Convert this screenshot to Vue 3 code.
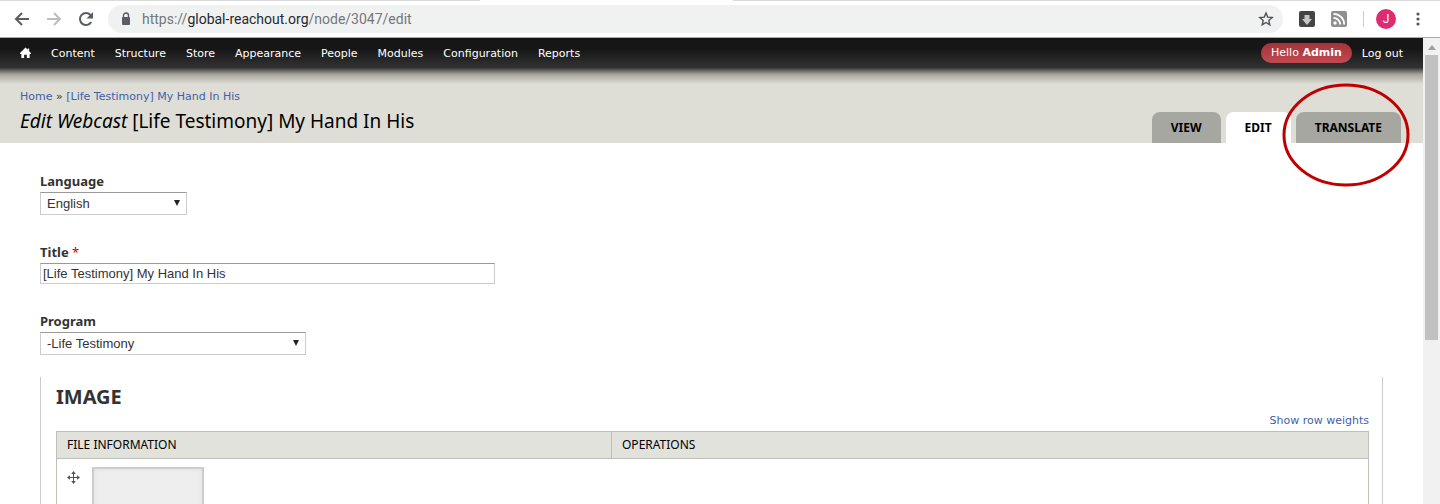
<script setup>
import { ref } from 'vue'

const menu = ['Content', 'Structure', 'Store', 'Appearance', 'People', 'Modules', 'Configuration', 'Reports']
const tabs = [
  { label: 'View', active: false, marked: false },
  { label: 'Edit', active: true, marked: false },
  { label: 'Translate', active: false, marked: true },
]
const language = ref('English')
const title = ref('[Life Testimony] My Hand In His')
const program = ref('-Life Testimony')
</script>

<template>
  <div class="window">
    <header class="browser">
      <div class="tab-edge"><span></span></div>
      <div class="bar">
        <button class="nav" aria-label="Back">
          <svg width="16" height="16" viewBox="0 0 16 16"><path d="M15 8H2M8 2L2 8l6 6" fill="none" stroke="#5a5d61" stroke-width="2" /></svg>
        </button>
        <button class="nav" aria-label="Forward" disabled>
          <svg width="16" height="16" viewBox="0 0 16 16"><path d="M1 8h13M8 2l6 6-6 6" fill="none" stroke="#bdbdbd" stroke-width="2" /></svg>
        </button>
        <button class="nav" aria-label="Reload">
          <svg width="16" height="16" viewBox="0 0 16 16"><path d="M13.2 11A6 6 0 1 1 12.5 4" fill="none" stroke="#5a5d61" stroke-width="2" /><path d="M15 1v6.500H8.500z" fill="#5a5d61" /></svg>
        </button>
        <div class="address">
          <svg width="10" height="14" viewBox="0 0 10 14"><path d="M2.500 6V3.500a2.500 2.500 0 0 1 5 0V6" fill="none" stroke="#5a5d61" stroke-width="1.400" /><rect x="1" y="5" width="8" height="8" rx="1" fill="#5a5d61" /></svg>
          <span class="url">https://<b>global-reachout.org</b>/node/3047/edit</span>
          <button class="nav star" aria-label="Bookmark this page">
            <svg width="16" height="16" viewBox="0 0 16 16"><path d="M8 2l1.700 4.100 4.500.4-3.400 2.900 1 4.400L8 11.500l-3.800 2.300 1-4.400L1.800 6.500l4.500-.4z" fill="none" stroke="#4f5256" stroke-width="1.400" /></svg>
          </button>
        </div>
        <button class="nav ext" aria-label="Downloader">
          <svg width="16" height="16" viewBox="0 0 16 16"><rect width="16" height="16" rx="2" fill="#444" /><path d="M5.500 4h5v4H13l-5 6-5-6h2.500z" fill="#c6c6c6" /></svg>
        </button>
        <button class="nav ext" aria-label="RSS feed">
          <svg width="16" height="16" viewBox="0 0 16 16"><rect width="16" height="16" rx="2" fill="#8f8f8f" /><circle cx="4" cy="12" r="1.700" fill="#fff" /><path d="M2.500 6.800a6.700 6.700 0 0 1 6.700 6.700M2.500 2.800a10.700 10.700 0 0 1 10.700 10.700" fill="none" stroke="#fff" stroke-width="1.800" /></svg>
        </button>
        <span class="divider"></span>
        <button class="avatar" aria-label="Profile">J</button>
        <button class="nav more" aria-label="Menu">
          <svg width="4" height="14" viewBox="0 0 4 14"><g fill="#55585c"><circle cx="2" cy="2" r="1.600" /><circle cx="2" cy="7" r="1.600" /><circle cx="2" cy="12" r="1.600" /></g></svg>
        </button>
      </div>
    </header>

    <div class="viewport">
      <div class="page">
        <nav class="admin">
          <a href="#" class="home" aria-label="Home">
            <svg width="11" height="12" viewBox="0 0 12 12"><path d="M6 0L0 6v1h1.500v4.500h3V8h3v3.500h3V7H12V6L10 4V1H8.500v1.500z" fill="#fff" /></svg>
          </a>
          <a v-for="m in menu" :key="m" href="#">{{ m }}</a>
          <a href="#" class="hello">Hello <strong>Admin</strong></a>
          <a href="#" class="logout">Log out</a>
        </nav>

        <div class="branding">
          <div class="heading">
            <div class="crumbs"><a href="#">Home</a> » <a href="#">[Life Testimony] My Hand In His</a></div>
            <h1><em>Edit Webcast</em> [Life Testimony] My Hand In His</h1>
          </div>
          <ul class="tabs">
            <li v-for="t in tabs" :key="t.label">
              <a href="#" :class="{ active: t.active }">{{ t.label }}</a>
              <svg v-if="t.marked" class="ring" viewBox="0 0 128 104"><ellipse cx="64" cy="52" rx="62" ry="50" fill="none" stroke="#c00000" stroke-width="3" /></svg>
            </li>
          </ul>
        </div>

        <form class="content" @submit.prevent>
          <div class="field">
            <label for="language">Language</label>
            <div class="select language">
              <select id="language" v-model="language"><option>English</option></select>
              <svg width="6" height="6" viewBox="0 0 6 6"><path d="M0 0h6L3 6z" fill="#222" /></svg>
            </div>
          </div>
          <div class="field">
            <label for="title">Title <span class="required">*</span></label>
            <input id="title" v-model="title" type="text" />
          </div>
          <div class="field">
            <label for="program">Program</label>
            <div class="select program">
              <select id="program" v-model="program"><option>-Life Testimony</option></select>
              <svg width="6" height="6" viewBox="0 0 6 6"><path d="M0 0h6L3 6z" fill="#222" /></svg>
            </div>
          </div>

          <section class="group">
            <h2>IMAGE</h2>
            <div class="weights"><a href="#">Show row weights</a></div>
            <table>
              <thead>
                <tr><th class="file">FILE INFORMATION</th><th>OPERATIONS</th></tr>
              </thead>
              <tbody>
                <tr>
                  <td colspan="2">
                    <div class="file-row">
                      <a href="#" class="handle" aria-label="Drag to re-order">
                        <svg width="13" height="13" viewBox="0 0 13 13"><path d="M6.500 2v9M2 6.500h9" stroke="#555" stroke-width="1" /><path d="M6.500 0l2.300 3H4.200zM6.500 13l2.300-3H4.200zM0 6.500l3-2.300v4.600zM13 6.500l-3-2.300v4.600z" fill="#555" /></svg>
                      </a>
                      <div class="thumb"></div>
                    </div>
                  </td>
                </tr>
              </tbody>
            </table>
          </section>
        </form>
      </div>

      <div class="scrollbar">
        <svg width="8" height="5" viewBox="0 0 8 5"><path d="M4 0l4 5H0z" fill="#a0a0a0" /></svg>
        <div class="thumb-bar"></div>
      </div>
    </div>
  </div>
</template>

<style>
body { margin: 0; }
</style>

<style scoped>
* { box-sizing: border-box; }
a { color: #3f5fa8; text-decoration: none; }
button { border: 0; padding: 0; background: none; }
svg { display: block; flex: none; }
.window {
  height: 100vh;
  overflow: hidden;
  display: flex;
  flex-direction: column;
  background: #fff;
  font-family: "DejaVu Sans", sans-serif;
  color: #333;
}
.browser { flex: none; height: 38px; border-bottom: 1px solid #aaa; }
.tab-edge { height: 1px; background: #dadada; display: flex; }
.tab-edge span { width: 253px; margin-left: 480px; background: #fff; }
.bar { height: 36px; display: flex; align-items: center; padding: 0 20px 0 14px; }
.nav { display: flex; }
.bar > .nav:nth-child(-n+3) { margin-right: 16px; }
.address {
  flex: 1;
  min-width: 0;
  height: 28px;
  margin-left: -2px;
  padding: 0 9px 0 13px;
  display: flex;
  align-items: center;
  border-radius: 14px;
  background: #f0f2f2;
}
.url { flex: 1; margin-left: 11px; font: 14px Roboto, sans-serif; color: #73777b; white-space: nowrap; }
.url b { font-weight: 400; color: #26282b; }
.ext { margin-left: 16px; }
.divider { width: 1px; height: 16px; margin: 0 12px 0 16px; background: #ccc; }
.avatar { width: 20px; height: 20px; border-radius: 50%; background: #dd2c72; color: #fff; font: 12px/20px Roboto, sans-serif; }
.more { margin-left: 20px; }

.viewport { flex: 1; min-height: 0; display: flex; }
.page { flex: 1; min-width: 0; overflow: hidden; }
.admin {
  position: relative;
  height: 30px;
  padding: 0 20px;
  display: flex;
  align-items: center;
  gap: 20px;
  background: linear-gradient(#161616 35%, #333);
  font-size: 11px;
}
.admin::after {
  content: "";
  position: absolute;
  inset: 100% 0 auto 0;
  height: 16px;
  background: linear-gradient(rgba(40, 40, 40, .9), rgba(80, 80, 72, .4) 40%, rgba(120, 120, 110, 0));
}
.admin a { color: #fff; }
.hello { height: 20px; line-height: 20px; padding: 0 10px; margin-left: auto; border-radius: 10px; background: linear-gradient(#a5323b, #c04a50); }
.logout { margin-left: -10px; }

.branding { height: 75px; padding: 0 22px 0 20px; display: flex; justify-content: space-between; align-items: flex-end; background: #deded7; }
.heading { align-self: flex-start; padding-top: 21px; white-space: nowrap; }
.crumbs { font-size: 11px; line-height: 16px; }
h1 { margin: 2px 0 0; font: 19px/28px "Noto Sans", sans-serif; color: #000; }
.tabs { display: flex; gap: 5px; margin: 0; padding: 0; list-style: none; }
.tabs li { position: relative; }
.tabs a {
  display: block;
  padding: 0 19px;
  border-radius: 8px 8px 0 0;
  background: #a6a7a1;
  color: #000;
  font: bold 12px/31px "Noto Sans", sans-serif;
  text-transform: uppercase;
}
.tabs a.active { background: #fff; }
.ring { position: absolute; width: 128px; height: 104px; left: -14px; top: -29px; z-index: 2; overflow: visible; pointer-events: none; }

.content { padding: 30px 40px 0; }
.field { margin-bottom: 29px; }
.field label { display: block; font: bold 13px/16px "Noto Sans", sans-serif; margin-bottom: 3px; }
.required { color: #c00; font-weight: 400; }
.select { position: relative; }
.select select { width: 100%; height: 23px; padding: 0 6px; appearance: none; }
.select svg { position: absolute; right: 7px; top: 8px; pointer-events: none; }
.language { width: 147px; }
.program { width: 266px; }
.select select, input {
  display: block;
  border: 1px solid #ccc;
  border-top-color: #999;
  border-radius: 0;
  background: #fff;
  color: #333;
  font: 13px "Liberation Sans", Arial, sans-serif;
}
input { width: 455px; height: 21px; padding: 0 2px; }

.group { margin-top: -7px; padding: 4px 13px 0 15px; border: solid #ccc; border-width: 0 1px; }
h2 { margin: 0; font: bold 20px/32px "Noto Sans", sans-serif; }
.weights { padding-bottom: 2px; text-align: right; font-size: 11px; line-height: 16px; }
table { width: 100%; border-collapse: collapse; table-layout: fixed; }
th { height: 27px; padding: 0 10px 2px; border: 1px solid #bebfb9; background: #e1e2dc; color: #000; font: 12px "Noto Sans", sans-serif; text-align: left; }
.file { width: 555px; }
td { padding: 8px 10px; border: 1px solid #bebfb9; }
.file-row { display: flex; gap: 12px; }
.handle { padding-top: 4px; }
.thumb { width: 112px; height: 112px; border: 2px solid #ccc; background: #eee; box-shadow: inset 0 0 4px #ddd; }

.scrollbar { flex: none; width: 17px; padding: 7px 2px 0; background: #f1f1f1; display: flex; flex-direction: column; align-items: center; gap: 5px; }
.thumb-bar { width: 13px; height: 62%; background: #c1c1c1; }
</style>
